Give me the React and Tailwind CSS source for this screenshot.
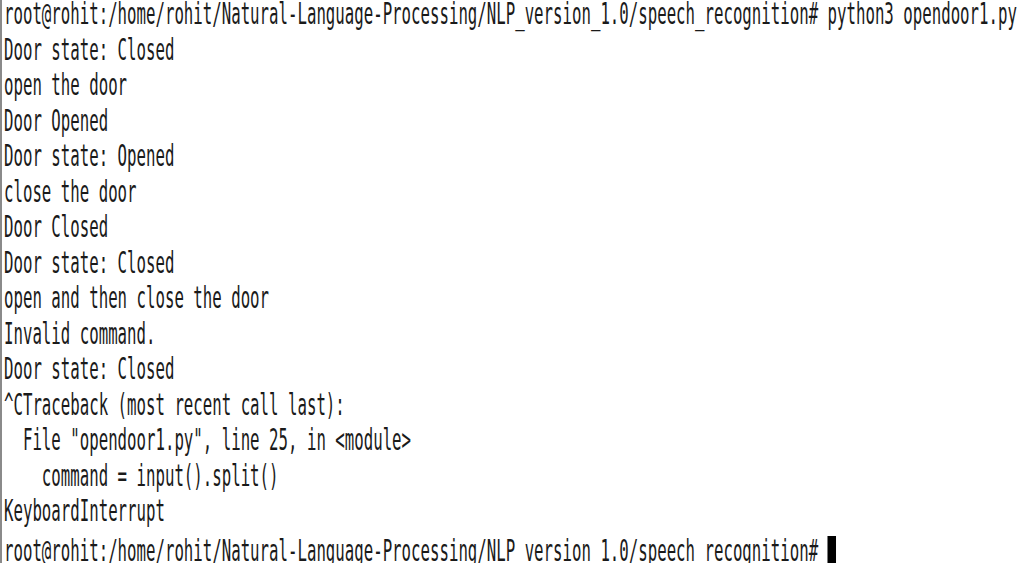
import React from 'react';

const lines = [
  'root@rohit:/home/rohit/Natural-Language-Processing/NLP_version_1.0/speech_recognition# python3 opendoor1.py',
  'Door state: Closed',
  'open the door',
  'Door Opened',
  'Door state: Opened',
  'close the door',
  'Door Closed',
  'Door state: Closed',
  'open and then close the door',
  'Invalid command.',
  'Door state: Closed',
  '^CTraceback (most recent call last):',
  '  File "opendoor1.py", line 25, in <module>',
  '    command = input().split()',
  'KeyboardInterrupt',
];

export default function App() {
  return (
    <div className="h-[563px] w-[1023px] overflow-hidden bg-white border-l-2 border-[#8a8a8a]">
      <div
        className="-mt-[3px] ml-[2px] w-[2000px] origin-top-left scale-x-[0.533] whitespace-pre text-[29.5px] leading-[35.5px] text-[#1a1a1a]"
        style={{ fontFamily: '"DejaVu Sans Mono", "Liberation Mono", monospace' }}
      >
        {lines.map((line, i) => (
          <div key={i}>{line}</div>
        ))}
        <div>
          root@rohit:/home/rohit/Natural-Language-Processing/NLP_version_1.0/speech_recognition#{' '}
          <span className="inline-block h-[31px] w-[16px] translate-y-[6px] bg-black align-baseline" />
        </div>
      </div>
    </div>
  );
}
